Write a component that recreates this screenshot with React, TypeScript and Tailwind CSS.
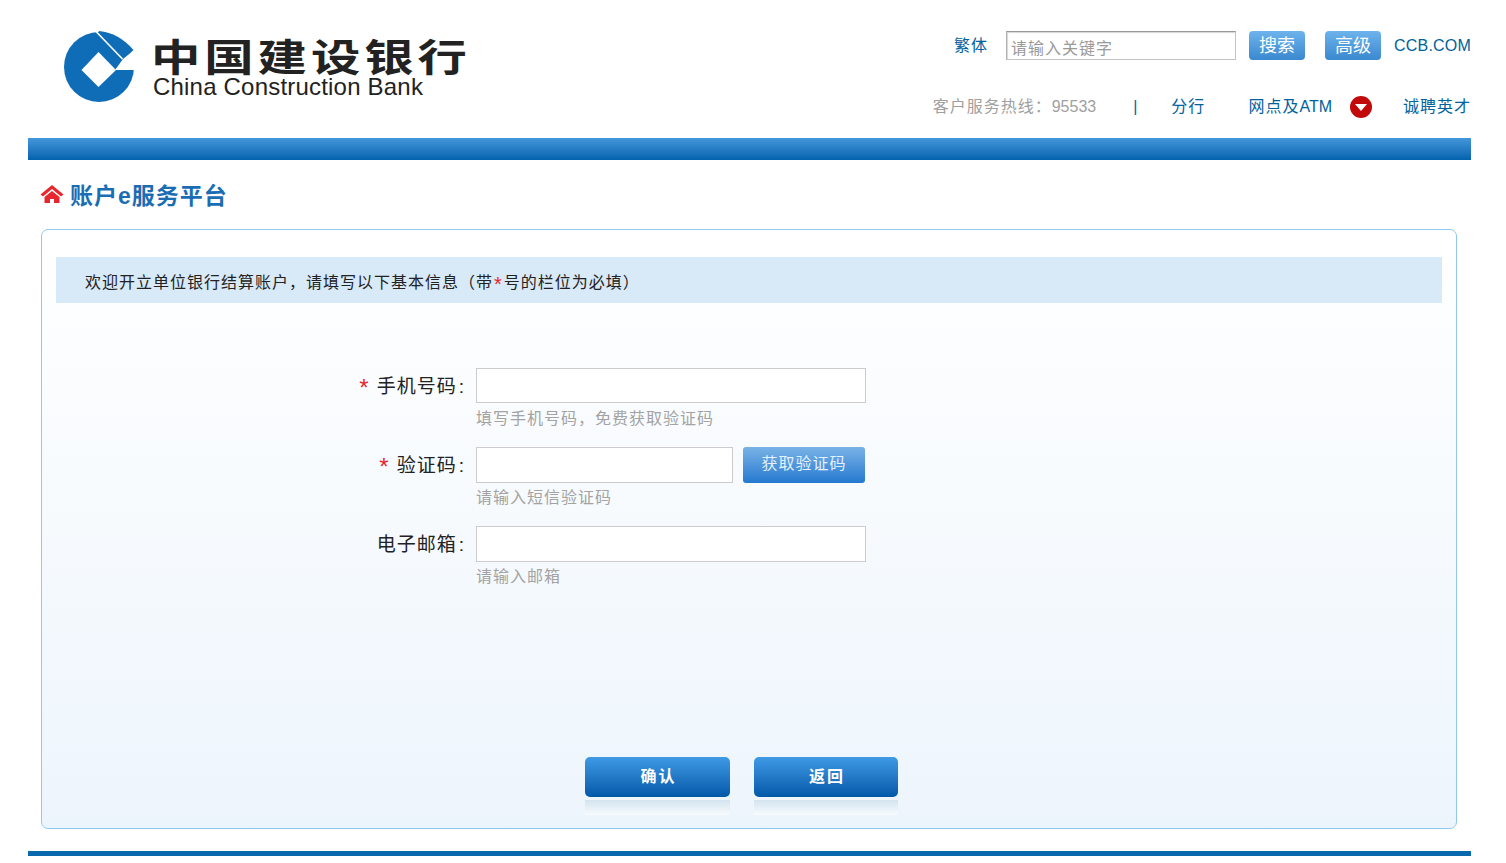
const cjk = "font-['Liberation_Sans','Noto_Sans_CJK_SC',sans-serif]";

function Logo() {
  return (
    <svg width="72" height="74" viewBox="0 0 72 74" className="shrink-0">
      <circle cx="35" cy="37" r="35" fill="#0f6db8" />
      <path d="M35 1 Q55 3 69.5 20 L59.5 30 L34 3 Z" fill="#0f6db8" />
      <polygon points="51,40 73,40 73,19 69.5,20.5 59,29" fill="#ffffff" />
      <line x1="32.5" y1="2" x2="58.5" y2="29" stroke="#ffffff" strokeWidth="1.6" />
      <polygon points="34.5,22 52,40 34.5,57 17.5,40" fill="#ffffff" />
    </svg>
  );
}

function Field({ label, required, hint, children }: { label: string; required?: boolean; hint: string; children: React.ReactNode }) {
  return (
    <div className="mb-[11px]">
      <div className="flex items-start h-[36px]">
        <div className="w-[434px] shrink-0 pr-[11px] text-right text-[19px] leading-[37px] tracking-[1px] text-[#222]">
          {required && <span className="inline-block translate-y-[3px] text-[#e8262d] text-[24px] leading-none mr-[7px]">*</span>}
          {label}
          <span className="ml-[2px]">:</span>
        </div>
        {children}
      </div>
      <div className="pl-[434px] mt-[1px] h-[31px] text-[16px] leading-[28px] tracking-[1px] text-[#a3a3a3]">{hint}</div>
    </div>
  );
}

function BigButton({ label, width }: { label: string; width: string }) {
  return (
    <div className={width}>
      <div className="h-[40px] rounded-[5px] bg-gradient-to-b from-[#3f9ae6] to-[#0059a8] pl-[2px] text-center text-white font-bold text-[16px] leading-[40px] tracking-[2px]">
        {label}
      </div>
      <div className="mt-[3px] h-[15px] bg-gradient-to-b from-[#d3e4ef] to-[#f8fbfd]" />
    </div>
  );
}

export default function App() {
  return (
    <div className={`w-[1443px] ml-[28px] ${cjk} bg-white`}>
      <header className="h-[138px] flex justify-between">
        <div className="flex pl-[36px] pt-[30px] items-start">
          <Logo />
          <div className="ml-[17px]">
            <div className="w-[246px] -ml-[2px] mt-[1px] origin-left scale-x-[1.3] text-[38px] leading-[47px] font-bold tracking-[3px] whitespace-nowrap text-[#222] font-['Noto_Sans_CJK_SC',sans-serif]">中国建设银行</div>
            <div className="text-[24px] leading-[18px] tracking-[0.2px] text-[#222] font-['Liberation_Sans',sans-serif]">China Construction Bank</div>
          </div>
        </div>
        <div className="flex flex-col items-end pt-[31px]">
          <div className="flex items-center h-[29px] text-[16px]">
            <span className="tracking-[1px] text-[#00629e]">繁体</span>
            <div className="ml-[18px] w-[230px] h-[29px] border border-[#c4c4c4] border-t-[#9a9a9a] border-l-[#b0b0b0] shadow-[inset_1px_1px_1px_#d8d8d8] pl-[4px] text-[#9a9a9a] leading-[34px] tracking-[1px]">请输入关键字</div>
            <div className="ml-[13px] w-[56px] h-[29px] rounded-[4px] bg-gradient-to-b from-[#6db3ec] to-[#3a88d0] text-center text-white text-[18px] leading-[31px]">搜索</div>
            <div className="ml-[20px] w-[56px] h-[29px] rounded-[4px] bg-gradient-to-b from-[#6db3ec] to-[#3a88d0] text-center text-white text-[18px] leading-[31px]">高级</div>
            <span className="ml-[13px] tracking-[0.2px] text-[#00629e]">CCB.COM</span>
          </div>
          <div className="flex items-center h-[24px] mt-[35px] text-[16px] tracking-[1px] text-[#00629e]">
            <span className="text-[#a0a0a0]">客户服务热线：<span className="tracking-normal">95533</span></span>
            <span className="ml-[37px]">|</span>
            <span className="ml-[33px]">分行</span>
            <span className="ml-[43px]">网点及<span className="tracking-normal">ATM</span></span>
            <svg width="22" height="22" viewBox="0 0 22 22" className="ml-[18px]">
              <circle cx="11" cy="11" r="11" fill="#c20a0a" />
              <polygon points="5,8 17,8 11,15" fill="#ffffff" />
            </svg>
            <span className="ml-[31px]">诚聘英才</span>
          </div>
        </div>
      </header>

      <div className="h-[22px] bg-gradient-to-b from-[#4298dc] to-[#0062ae]" />

      <div className="h-[69px] pl-[12px] flex items-center">
        <svg width="24" height="20" viewBox="0 0 24 20" className="-mt-[1px]">
          <path d="M12 1 L0.5 10.5 L3 12.5 L12 5 L21 12.5 L23.5 10.5 Z" fill="#e8262d" />
          <path d="M4.5 13 L12 7 L19.5 13 V19 H14 V15 H10 V19 H4.5 Z" fill="#e8262d" />
        </svg>
        <div className="ml-[6px] mt-[3px] text-[23px] tracking-[1px] font-semibold text-[#1a6db3]">
          账户<span className="font-bold">e</span>服务平台
        </div>
      </div>

      <main className="ml-[13px] w-[1416px] h-[600px] border border-[#8fcaee] rounded-[7px] bg-gradient-to-b from-white to-[#edf5fc] px-[14px] pt-[27px]">
        <div className="h-[46px] bg-[#d8e9f8] pl-[29px] text-[16px] leading-[51px] tracking-[1px] text-[#222]">
          欢迎开立单位银行结算账户，请填写以下基本信息（带<span className="inline-block translate-y-[3px] mx-[1px] text-[#e8262d] text-[20px] leading-none">*</span>号的栏位为必填）
        </div>

        <div className="-mx-[14px] mt-[65px]">
          <Field label="手机号码" required hint="填写手机号码，免费获取验证码">
            <div className="w-[390px] h-[35px] border border-[#cccccc] bg-white" />
          </Field>
          <Field label="验证码" required hint="请输入短信验证码">
            <div className="w-[257px] h-[36px] border border-[#cccccc] bg-white" />
            <div className="ml-[10px] w-[122px] h-[36px] rounded-[3px] bg-gradient-to-b from-[#78b2e6] to-[#2279d0] text-center text-[16px] leading-[34px] tracking-[1px] text-[#e4f0fb]">获取验证码</div>
          </Field>
          <Field label="电子邮箱" hint="请输入邮箱">
            <div className="w-[390px] h-[36px] border border-[#cccccc] bg-white" />
          </Field>
        </div>

        <div className="flex mt-[163px] ml-[529px] gap-[24px]">
          <BigButton label="确认" width="w-[145px]" />
          <BigButton label="返回" width="w-[144px]" />
        </div>
      </main>

      <div className="mt-[22px] h-[5px] bg-[#0a69ad]" />
    </div>
  );
}
